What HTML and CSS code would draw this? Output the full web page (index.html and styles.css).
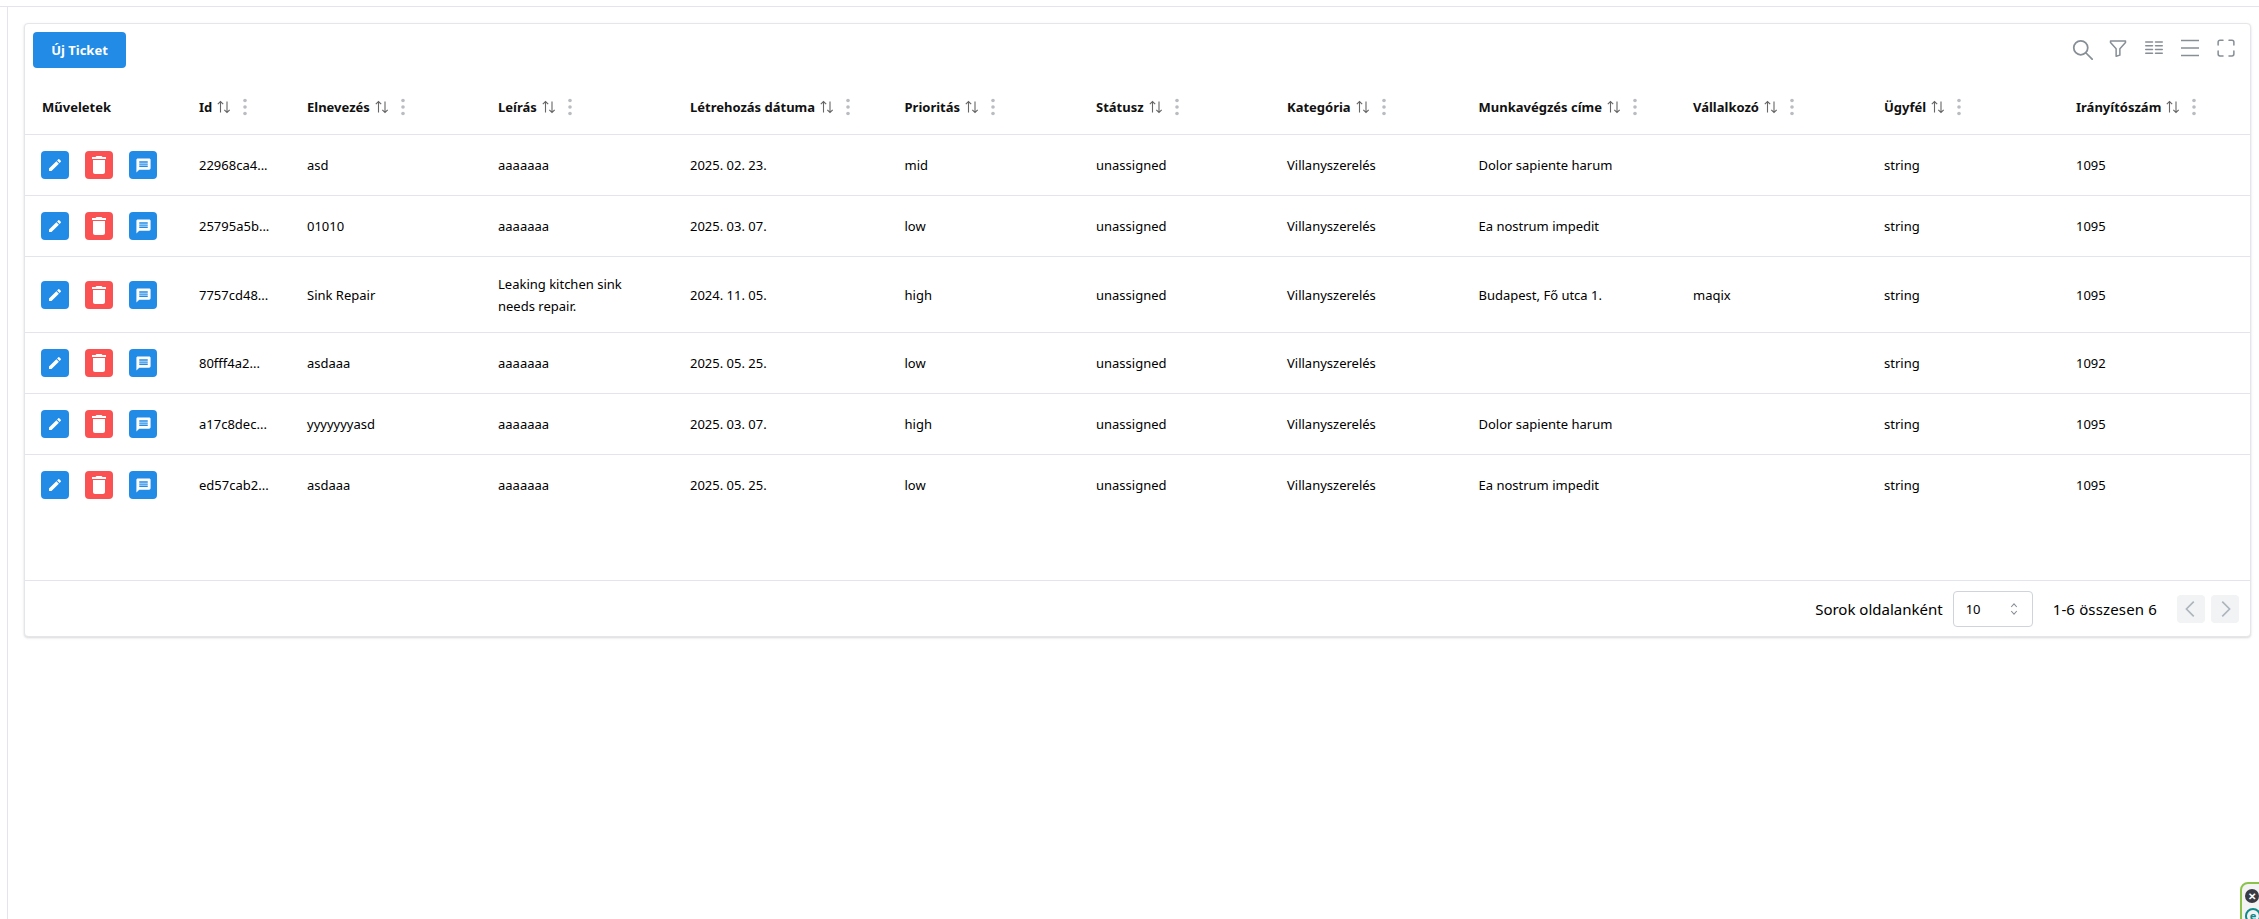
FILE: index.html
```html
<!DOCTYPE html>
<html lang="hu">
<head>
<meta charset="utf-8">
<title>Ticketek</title>
<link rel="stylesheet" href="styles.css">
</head>
<body>
<svg class="sprite" width="0" height="0" aria-hidden="true">
  <symbol id="i-edit" viewBox="0 0 24 24"><path d="M3 17.25V21h3.75L17.81 9.94l-3.75-3.75L3 17.25zM20.71 7.04c.39-.39.39-1.02 0-1.41l-2.34-2.34a.9959.9959 0 0 0-1.41 0l-1.83 1.83 3.75 3.75 1.83-1.83z"/></symbol>
  <symbol id="i-del" viewBox="0 0 24 24"><path d="M6 19c0 1.1.9 2 2 2h8c1.1 0 2-.9 2-2V7H6v12zM19 4h-3.5l-1-1h-5l-1 1H5v2h14V4z"/></symbol>
  <symbol id="i-msg" viewBox="0 0 24 24"><path d="M20 2H4c-1.1 0-1.99.9-1.99 2L2 22l4-4h14c1.1 0 2-.9 2-2V4c0-1.1-.9-2-2-2zm-2 12H6v-2h12v2zm0-3H6V9h12v2zm0-3H6V6h12v2z"/></symbol>
  <symbol id="i-sort" viewBox="0 0 16 16"><path d="M4.500 13.500V2.500M1.800 5.200l2.700-2.700 2.700 2.700"/><path d="M11 2.500v11M8.300 10.800l2.700 2.700 2.700-2.700"/></symbol>
  <symbol id="i-dots" viewBox="0 0 14 20"><circle cx="7" cy="3.500" r="1.800"/><circle cx="7" cy="10" r="1.800"/><circle cx="7" cy="16.500" r="1.800"/></symbol>
</svg>

<div class="topbar"></div>
<div class="layout">
  <aside class="sidebar"></aside>
  <main class="content">
    <section class="card">
      <div class="toolbar">
        <button class="primary">Új Ticket</button>
        <div class="tools">
          <svg class="tool tool-search" viewBox="0 0 24 24"><circle cx="10" cy="10" r="8"/><path d="M16 16l7 7"/></svg>
          <svg class="tool" viewBox="0 0 24 24"><path d="M2 2.500h20v2.300l-7.500 8.200v8.500l-5 1.500V13L2 4.800z"/></svg>
          <svg class="tool" viewBox="0 0 24 24"><path d="M1 4h9M14 4h9M1 9h9M14 9h9M1 14h9M14 14h9M1 19h9M14 19h9"/></svg>
          <svg class="tool tool-wide" viewBox="0 0 24 24"><path d="M0 2h24M0 12h24M0 22h24"/></svg>
          <svg class="tool" viewBox="0 0 24 24"><path d="M1.500 8V4A2.500 2.500 0 0 1 4 1.500h4M16 1.500h4A2.500 2.500 0 0 1 22.500 4v4M22.500 16v4a2.500 2.500 0 0 1-2.500 2.500h-4M8 22.500H4A2.500 2.500 0 0 1 1.500 20v-4"/></svg>
        </div>
      </div>
      <div class="table-wrap">
        <table class="grid">
          <colgroup>
            <col class="c1"><col class="c2"><col class="c3"><col class="c4"><col class="c5"><col class="c6"><col class="c7"><col class="c8"><col class="c9"><col class="c10"><col class="c11"><col class="c12">
          </colgroup>
          <thead>
            <tr>
              <th>Műveletek</th>
              <th><span class="th">Id<svg class="sort"><use href="#i-sort"/></svg><svg class="dots"><use href="#i-dots"/></svg></span></th>
              <th><span class="th">Elnevezés<svg class="sort"><use href="#i-sort"/></svg><svg class="dots"><use href="#i-dots"/></svg></span></th>
              <th><span class="th">Leírás<svg class="sort"><use href="#i-sort"/></svg><svg class="dots"><use href="#i-dots"/></svg></span></th>
              <th><span class="th">Létrehozás dátuma<svg class="sort"><use href="#i-sort"/></svg><svg class="dots"><use href="#i-dots"/></svg></span></th>
              <th><span class="th">Prioritás<svg class="sort"><use href="#i-sort"/></svg><svg class="dots"><use href="#i-dots"/></svg></span></th>
              <th><span class="th">Státusz<svg class="sort"><use href="#i-sort"/></svg><svg class="dots"><use href="#i-dots"/></svg></span></th>
              <th><span class="th">Kategória<svg class="sort"><use href="#i-sort"/></svg><svg class="dots"><use href="#i-dots"/></svg></span></th>
              <th><span class="th">Munkavégzés címe<svg class="sort"><use href="#i-sort"/></svg><svg class="dots"><use href="#i-dots"/></svg></span></th>
              <th><span class="th">Vállalkozó<svg class="sort"><use href="#i-sort"/></svg><svg class="dots"><use href="#i-dots"/></svg></span></th>
              <th><span class="th">Ügyfél<svg class="sort"><use href="#i-sort"/></svg><svg class="dots"><use href="#i-dots"/></svg></span></th>
              <th><span class="th">Irányítószám<svg class="sort"><use href="#i-sort"/></svg><svg class="dots"><use href="#i-dots"/></svg></span></th>
            </tr>
          </thead>
          <tbody>
            <tr>
              <td><div class="actions"><button class="act blue"><svg class="ic-edit"><use href="#i-edit"/></svg></button><button class="act red"><svg><use href="#i-del"/></svg></button><button class="act blue"><svg><use href="#i-msg"/></svg></button></div></td>
              <td>22968ca4...</td><td>asd</td><td>aaaaaaa</td><td>2025. 02. 23.</td><td>mid</td><td>unassigned</td><td>Villanyszerelés</td><td>Dolor sapiente harum</td><td></td><td>string</td><td>1095</td>
            </tr>
            <tr>
              <td><div class="actions"><button class="act blue"><svg class="ic-edit"><use href="#i-edit"/></svg></button><button class="act red"><svg><use href="#i-del"/></svg></button><button class="act blue"><svg><use href="#i-msg"/></svg></button></div></td>
              <td>25795a5b...</td><td>01010</td><td>aaaaaaa</td><td>2025. 03. 07.</td><td>low</td><td>unassigned</td><td>Villanyszerelés</td><td>Ea nostrum impedit</td><td></td><td>string</td><td>1095</td>
            </tr>
            <tr class="tall">
              <td><div class="actions"><button class="act blue"><svg class="ic-edit"><use href="#i-edit"/></svg></button><button class="act red"><svg><use href="#i-del"/></svg></button><button class="act blue"><svg><use href="#i-msg"/></svg></button></div></td>
              <td>7757cd48...</td><td>Sink Repair</td><td>Leaking kitchen sink<br>needs repair.</td><td>2024. 11. 05.</td><td>high</td><td>unassigned</td><td>Villanyszerelés</td><td>Budapest, Fő utca 1.</td><td>maqix</td><td>string</td><td>1095</td>
            </tr>
            <tr>
              <td><div class="actions"><button class="act blue"><svg class="ic-edit"><use href="#i-edit"/></svg></button><button class="act red"><svg><use href="#i-del"/></svg></button><button class="act blue"><svg><use href="#i-msg"/></svg></button></div></td>
              <td>80fff4a2...</td><td>asdaaa</td><td>aaaaaaa</td><td>2025. 05. 25.</td><td>low</td><td>unassigned</td><td>Villanyszerelés</td><td></td><td></td><td>string</td><td>1092</td>
            </tr>
            <tr>
              <td><div class="actions"><button class="act blue"><svg class="ic-edit"><use href="#i-edit"/></svg></button><button class="act red"><svg><use href="#i-del"/></svg></button><button class="act blue"><svg><use href="#i-msg"/></svg></button></div></td>
              <td>a17c8dec...</td><td>yyyyyyyasd</td><td>aaaaaaa</td><td>2025. 03. 07.</td><td>high</td><td>unassigned</td><td>Villanyszerelés</td><td>Dolor sapiente harum</td><td></td><td>string</td><td>1095</td>
            </tr>
            <tr class="last">
              <td><div class="actions"><button class="act blue"><svg class="ic-edit"><use href="#i-edit"/></svg></button><button class="act red"><svg><use href="#i-del"/></svg></button><button class="act blue"><svg><use href="#i-msg"/></svg></button></div></td>
              <td>ed57cab2...</td><td>asdaaa</td><td>aaaaaaa</td><td>2025. 05. 25.</td><td>low</td><td>unassigned</td><td>Villanyszerelés</td><td>Ea nostrum impedit</td><td></td><td>string</td><td>1095</td>
            </tr>
          </tbody>
        </table>
      </div>
      <footer class="pager">
        <span class="pager-label">Sorok oldalanként</span>
        <div class="select"><span>10</span><svg class="updown" viewBox="0 0 12 20"><path d="M2.500 7.500L6 3.500l3.500 4M2.500 12.500L6 16.500l3.500-4"/></svg></div>
        <span class="pager-info">1-6 összesen 6</span>
        <div class="pager-btns">
          <button class="nav"><svg viewBox="0 0 24 24"><path d="M15 4l-8 8 8 8"/></svg></button>
          <button class="nav"><svg viewBox="0 0 24 24"><path d="M9 4l8 8-8 8"/></svg></button>
        </div>
      </footer>
    </section>
  </main>
</div>

<div class="widget">
  <span class="widget-close">✕</span>
  <span class="widget-logo">e</span>
</div>
</body>
</html>
```

FILE: styles.css
```css
* { box-sizing: border-box; }
html, body { margin: 0; height: 100%; overflow: hidden; }
body {
  background: #fff;
  color: #000;
  font-family: "Noto Sans", "Open Sans", sans-serif;
  font-size: 13px;
  position: relative;
}
.sprite { position: absolute; }
.topbar { height: 7px; border-bottom: 1px solid #e4e4ec; }
.layout { display: flex; height: 912px; }
.sidebar { width: 8px; border-right: 1px solid #e4e4ec; }
.content { flex: 1; padding: 16px 8px 0 16px; }

.card {
  height: 614px;
  display: flex;
  flex-direction: column;
  border: 1px solid #e4e6ea;
  border-radius: 4px;
  box-shadow: 0 1px 3px rgba(0,0,0,.1), 0 1px 2px rgba(0,0,0,.06);
  background: #fff;
}
.toolbar {
  height: 56px;
  padding: 8px 15px 0 8px;
  display: flex;
  justify-content: space-between;
  align-items: flex-start;
}
.primary {
  height: 36px;
  width: 93px;
  border: 0;
  border-radius: 4px;
  background: #228be6;
  color: #fff;
  font: 700 13px "Noto Sans", sans-serif;
  padding: 0;
}
.tools { display: flex; gap: 18px; padding-top: 7px; }
.tool {
  width: 18px;
  height: 18px;
  fill: none;
  stroke: #868e96;
  stroke-width: 2;
  stroke-linecap: round;
  stroke-linejoin: round;
}
.tool-wide { stroke-linecap: butt; }
.tool-search { width: 21px; height: 21px; margin-right: -2px; }

.table-wrap { flex: 1; min-height: 0; }
.grid { width: 100%; table-layout: fixed; border-collapse: separate; border-spacing: 0; }
.c1 { width: 157px; } .c2 { width: 108px; } .c3 { width: 191px; } .c4 { width: 192px; }
.c5 { width: 214.5px; } .c6 { width: 191.5px; } .c7 { width: 191px; } .c8 { width: 191.5px; }
.c9 { width: 214.5px; } .c10 { width: 191px; } .c11 { width: 192px; } .c12 { width: 191px; }

.grid th {
  height: 55px;
  padding: 0 0 0 17px;
  text-align: left;
  font-weight: 700;
  font-size: 13px;
  color: #111;
  border-bottom: 1px solid #e4e4ec;
  white-space: nowrap;
}
.th { display: inline-flex; align-items: center; }
.sort {
  width: 16px;
  height: 16px;
  margin-left: 4px;
  fill: none;
  stroke: #666;
  stroke-width: 1.1;
}
.dots { width: 14px; height: 20px; margin-left: 6px; fill: #b9bcc0; }

.grid td {
  padding: 16px 0 16px 17px;
  line-height: 22px;
  vertical-align: middle;
  border-bottom: 1px solid #e4e4ec;
  white-space: nowrap;
}
.grid .tall td { padding-bottom: 15px; }
.grid .last td { border-bottom: 0; }
.actions { display: flex; gap: 16px; margin-left: -1px; }
.act {
  width: 28px;
  height: 28px;
  padding: 0;
  border: 0;
  border-radius: 4px;
  display: flex;
  align-items: center;
  justify-content: center;
}
.act svg { width: 17px; height: 17px; fill: #fff; }
.act .ic-edit { width: 16px; height: 16px; }
.blue { background: #228be6; }
.red { background: #fa5252; }
.act.red svg { width: 24px; height: 24px; }

.pager {
  height: 56px;
  border-top: 1px solid #e4e4ec;
  display: flex;
  align-items: center;
  justify-content: flex-end;
  padding-right: 11px;
  font-size: 15px;
}
.pager-label { margin-right: 10px; }
.select {
  width: 80px;
  height: 36px;
  border: 1px solid #ced4da;
  border-radius: 4px;
  display: flex;
  align-items: center;
  justify-content: space-between;
  padding: 0 13px 0 12px;
  font-size: 13px;
}
.updown { width: 10px; height: 16px; fill: none; stroke: #868e96; stroke-width: 1.3; }
.pager-info { margin: 0 20px; letter-spacing: .15px; }
.pager-btns { display: flex; gap: 6px; }
.nav {
  width: 28px;
  height: 28px;
  padding: 0;
  border: 0;
  border-radius: 4px;
  background: #f1f3f5;
  display: flex;
  align-items: center;
  justify-content: center;
}
.nav svg { width: 22px; height: 22px; fill: none; stroke: #adb5bd; stroke-width: 1.8; }

.widget {
  position: absolute;
  left: 2240px;
  top: 882px;
  width: 40px;
  height: 60px;
  border: 2px solid #8bc34a;
  border-radius: 8px;
  background: #f3f3f3;
}
.widget-close {
  position: absolute;
  left: 3px;
  top: 5px;
  width: 14px;
  height: 14px;
  border-radius: 50%;
  background: #3a3a44;
  color: #fff;
  font-size: 10px;
  font-weight: 700;
  line-height: 14px;
  text-align: center;
}
.widget-logo {
  position: absolute;
  left: 3px;
  top: 24px;
  width: 16px;
  height: 16px;
  border: 2px solid #0e8a8a;
  border-radius: 50%;
  color: #0e8a8a;
  font-size: 11px;
  font-weight: 700;
  line-height: 12px;
  text-align: center;
}
```
